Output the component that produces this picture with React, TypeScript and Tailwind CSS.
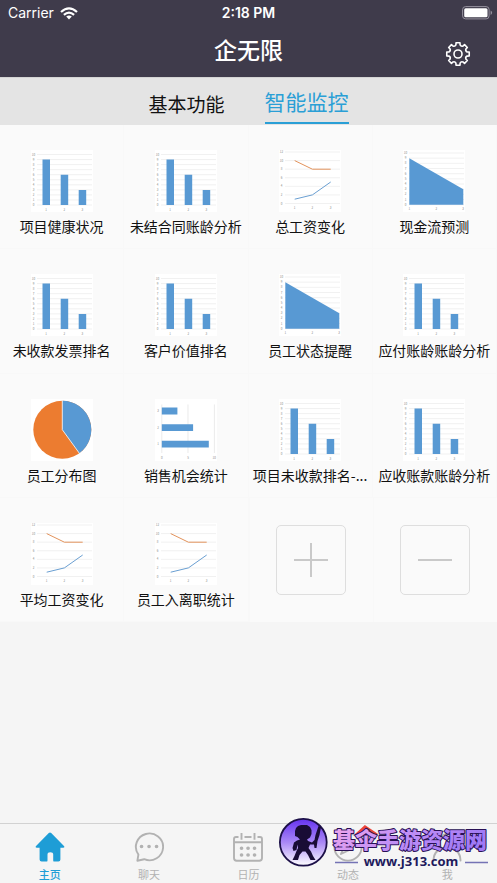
import type { ReactNode } from 'react'
import clsx from 'clsx'

type ChartKind = 'bar' | 'line' | 'area' | 'pie' | 'hbar'

const reports: { label: string; chart: ChartKind }[] = [
  { label: '项目健康状况', chart: 'bar' },
  { label: '未结合同账龄分析', chart: 'bar' },
  { label: '总工资变化', chart: 'line' },
  { label: '现金流预测', chart: 'area' },
  { label: '未收款发票排名', chart: 'bar' },
  { label: '客户价值排名', chart: 'bar' },
  { label: '员工状态提醒', chart: 'area' },
  { label: '应付账龄账龄分析', chart: 'bar' },
  { label: '员工分布图', chart: 'pie' },
  { label: '销售机会统计', chart: 'hbar' },
  { label: '项目未收款排名-...', chart: 'bar' },
  { label: '应收账款账龄分析', chart: 'bar' },
  { label: '平均工资变化', chart: 'line' },
  { label: '员工入离职统计', chart: 'line' },
]

const BLUE = '#5899d3'
const ORANGE = '#ec7c30'

function Chart({ children }: { children: ReactNode }) {
  return (
    <svg width="62" height="62" viewBox="0 0 62 62" fontSize="3" fill="#8a8a8a" textAnchor="middle" aria-hidden="true">
      <rect width="62" height="62" fill="#fff" />
      {children}
    </svg>
  )
}

// Horizontal grid with the value axis on the left
function Grid({ top, bottom, max, step }: { top: number; bottom: number; max: number; step: number }) {
  const count = max / step
  return (
    <>
      {Array.from({ length: count + 1 }, (_, i) => {
        const y = bottom - ((bottom - top) * i) / count
        return (
          <g key={i}>
            <path d={`M6 ${y}H61`} stroke="#e2e2e2" strokeWidth=".5" />
            <text x="2.5" y={y + 1}>{i * step}</text>
          </g>
        )
      })}
    </>
  )
}

function BarChart() {
  return (
    <Chart>
      <Grid top={4.5} bottom={55} max={10} step={1} />
      <path d="M11.5 9.5H19V55H11.5ZM29.7 24.7H37.2V55H29.7ZM47.7 39.9H55.2V55H47.7Z" fill={BLUE} />
      <text x="15.2" y="60.5">1</text>
      <text x="33.4" y="60.5">2</text>
      <text x="51.4" y="60.5">3</text>
    </Chart>
  )
}

function LineChart() {
  return (
    <Chart>
      <Grid top={2} bottom={53.5} max={12} step={2} />
      <path d="M15.7 10.6L33.4 19.2H51.7" fill="none" stroke="#e3935c" />
      <path d="M15.7 49.2L33.4 44.9L51.7 32" fill="none" stroke="#6a9fd2" />
      <text x="15.7" y="59">1</text>
      <text x="33.4" y="59">2</text>
      <text x="51.7" y="59">3</text>
    </Chart>
  )
}

function AreaChart() {
  return (
    <Chart>
      <Grid top={3} bottom={54.7} max={10} step={1} />
      <path d="M6.3 8.2L60.3 39.2V54.7H6.3Z" fill={BLUE} />
      <text x="6.3" y="60">1</text>
      <text x="33.3" y="60">2</text>
      <text x="60" y="60">3</text>
    </Chart>
  )
}

function PieChart() {
  return (
    <Chart>
      <circle cx="31.3" cy="30.7" r="29" fill={ORANGE} />
      <path d="M31.3 30.7V1.7A29 29 0 0 1 48.3 54.2Z" fill={BLUE} />
      <path d="M31.3 1.2V30.7L48.6 54.6" fill="none" stroke="#fff" strokeWidth=".8" />
    </Chart>
  )
}

function HBarChart() {
  return (
    <Chart>
      <path d="M6.8 5.5V54M33 5.5V54M59.4 5.5V54" stroke="#dcdcdc" strokeWidth=".6" />
      <path d="M6.8 8.5H22.4V15.5H6.8ZM6.8 25.2H38.1V32H6.8ZM6.8 41.8H53.8V48.6H6.8Z" fill={BLUE} />
      <text x="3" y="13">3</text>
      <text x="3" y="29.7">2</text>
      <text x="3" y="46.3">1</text>
      <text x="6.8" y="59.5">0</text>
      <text x="33" y="59.5">5</text>
      <text x="59.2" y="59.5">10</text>
    </Chart>
  )
}

const charts = { bar: BarChart, line: LineChart, area: AreaChart, pie: PieChart, hbar: HBarChart }

function WifiIcon() {
  return (
    <svg width="18" height="13" viewBox="0 0 18 13" fill="none" stroke="#fff" strokeWidth="2.2" aria-hidden="true">
      <path d="M1 5Q9-2.2 17 5" />
      <path d="M3.9 7.9Q9 3.4 14.1 7.9" />
      <path d="M9 12.4L6.2 9.6Q9 7.4 11.8 9.6Z" fill="#fff" stroke="none" />
    </svg>
  )
}

function BatteryIcon() {
  return (
    <svg width="31" height="14" viewBox="0 0 31 14" fill="none" aria-hidden="true">
      <rect x=".6" y=".6" width="26.5" height="12.3" rx="3" stroke="#97939f" />
      <rect x="2.2" y="2.2" width="23.3" height="9.1" rx="1.5" fill="#fff" />
      <path d="M28.6 4.5Q31.6 6.7 28.6 9Z" fill="#97939f" />
    </svg>
  )
}

function GearIcon() {
  const teeth = Array.from({ length: 8 }, (_, i) => {
    const at = (deg: number, r: number) => {
      const a = ((i * 45 + deg - 90) * Math.PI) / 180
      return `${(13 + r * Math.cos(a)).toFixed(2)} ${(13 + r * Math.sin(a)).toFixed(2)}`
    }
    return `${i ? 'L' : 'M'}${at(-10, 11.4)}L${at(10, 11.4)}L${at(13, 9.3)}Q${at(22.5, 7.8)} ${at(32, 9.3)}`
  }).join('')
  return (
    <svg width="26" height="26" viewBox="0 0 26 26" fill="none" stroke="#fff" strokeWidth="1.6" strokeLinejoin="round" aria-hidden="true">
      <path d={teeth + 'Z'} />
      <circle cx="13" cy="13" r="4" />
    </svg>
  )
}

function HomeIcon() {
  return (
    <svg width="30" height="30" viewBox="0 0 30 30" fill="currentColor" aria-hidden="true">
      <path d="M13.8.9Q15 0 16.2.9L29.2 14.2Q30 15.6 28.3 15.7H25.4V27.6Q25.4 29.6 23.4 29.6H19.4Q18.2 29.6 18.2 28.4V22.4Q18.2 20.3 15.3 20.3Q12.5 20.3 12.5 22.4V28.4Q12.5 29.6 11.3 29.6H6.6Q4.6 29.6 4.6 27.6V15.7H1.7Q0 15.6.8 14.2Z" />
    </svg>
  )
}

function ChatIcon() {
  return (
    <svg width="30" height="30" viewBox="0 0 30 30" fill="none" stroke="currentColor" strokeWidth="1.9" strokeLinejoin="round" aria-hidden="true">
      <path d="M4.4 22.6A13.6 13.4 0 1 1 10.2 27.2L3.4 28.7Z" />
      <path d="M7.5 14.5h.1M15 14.5h.1M22.5 14.5h.1" strokeWidth="3.6" strokeLinecap="round" />
    </svg>
  )
}

function CalendarIcon() {
  return (
    <svg width="30" height="30" viewBox="0 0 30 30" fill="none" stroke="currentColor" strokeWidth="1.9" aria-hidden="true">
      <path d="M5.5 5H3Q1 5 1 7V26Q1 28.7 3.7 28.7H26.3Q29 28.7 29 26V7Q29 5 27 5H24.5M11.5 5H18.5M1 10.2H29M8.5 1V7.8M21.5 1V7.8" />
      <path d="M8.5 16.3h.1M15 16.3h.1M21.5 16.3h.1M8.5 23h.1M15 23h.1M21.5 23h.1" strokeWidth="3.6" strokeLinecap="round" />
    </svg>
  )
}

function MomentsIcon() {
  return (
    <svg width="30" height="30" viewBox="0 0 30 30" fill="none" stroke="currentColor" strokeWidth="1.9" strokeLinejoin="round" aria-hidden="true">
      <circle cx="15" cy="15" r="13.6" />
      <path d="M22 8L17.5 17.5L8 22L12.5 12.5Z" />
    </svg>
  )
}

function MeIcon() {
  return (
    <svg width="30" height="30" viewBox="0 0 30 30" fill="none" stroke="currentColor" strokeWidth="1.9" strokeLinecap="round" aria-hidden="true">
      <circle cx="15" cy="10" r="8" />
      <path d="M1.5 28.5Q2 16 15 16Q28 16 28.5 28.5" />
    </svg>
  )
}

const navItems = [
  { label: '主页', icon: HomeIcon },
  { label: '聊天', icon: ChatIcon },
  { label: '日历', icon: CalendarIcon },
  { label: '动态', icon: MomentsIcon },
  { label: '我', icon: MeIcon },
]

function SiteBadge() {
  return (
    <svg className="pointer-events-none absolute right-1 bottom-3 w-[216px]" viewBox="0 0 216 56" role="img" aria-label="基伞手游资源网 www.j313.com">
      <defs>
        <linearGradient id="sky" x1="0" y1="0" x2="0" y2="1">
          <stop offset="0" stopColor="#6532f0" />
          <stop offset=".5" stopColor="#a988f5" />
          <stop offset="1" stopColor="#fff" />
        </linearGradient>
        <linearGradient id="letters" x1="0" y1="0" x2="1" y2=".3">
          <stop offset="0" stopColor="#f3a8ea" />
          <stop offset=".5" stopColor="#c391f5" />
          <stop offset="1" stopColor="#a07af5" />
        </linearGradient>
      </defs>
      <circle cx="26.3" cy="27.3" r="23.4" fill="url(#sky)" stroke="#1c1048" strokeWidth="1.8" />
      <g fill="#190c35">
        <path d="M19 13L21 11L24 10H30L33 12L34.5 15V19L33 22.5L30 24.5L31 26L35 27.5L37.5 25L38.5 20L41.5 11L44 12L42.5 20L40.5 26L39.5 33H37.5L37 29.5H33L31.5 33L34 36.5L36 41L38.5 45H33.5L31 40L28.5 36.5H25.5L22.5 40L21 45H15.5L17.5 41L19.5 36L21 33L20.5 29.5L19.5 35L16.5 36L15.5 33L17 27.5L20 25.5L23 24.5L20.5 22L18 21V16Z" />
      </g>
      <path d="M79 20L88 12L100 20" fill="none" stroke="#ec4438" strokeWidth="3" />
      <text x="56" y="33" fontSize="22" fontWeight="900" fontFamily="'Noto Sans CJK SC', sans-serif" fill="url(#letters)" stroke="#281054" strokeWidth="2" strokeLinejoin="round" paintOrder="stroke">
        基伞手游资源网
      </text>
      <path d="M58 47.5H81M188 47.5H211" stroke="#7573b5" strokeWidth="1.3" />
      <text x="134" y="51" fontSize="13" fontWeight="700" fontFamily="'Open Sans', sans-serif" textAnchor="middle" fill="#211a5c">
        www.j313.com
      </text>
    </svg>
  )
}

export default function App() {
  return (
    <div className="flex min-h-screen flex-col bg-[#f5f5f5] font-['Noto_Sans_CJK_SC',sans-serif] text-[#111]">
      <header className="bg-[#3f3b4b] text-white">
        <div className="grid h-[26px] grid-cols-3 items-center px-2 font-['Inter',sans-serif] text-sm">
          <div className="flex items-center gap-1.5">
            <span>Carrier</span>
            <WifiIcon />
          </div>
          <span className="text-center font-semibold">2:18 PM</span>
          <div className="-mr-1 flex justify-end">
            <BatteryIcon />
          </div>
        </div>
        <div className="grid h-[51px] grid-cols-[1fr_auto_1fr] items-center px-[26px]">
          <h1 className="col-start-2 pb-1.5 text-[23px] leading-8 font-medium">企无限</h1>
          <button type="button" aria-label="设置" className="justify-self-end pt-1">
            <GearIcon />
          </button>
        </div>
      </header>

      <div className="flex h-12 items-stretch justify-center gap-10 border-t border-[#d4d4d4] bg-[#e4e4e4]">
        <button type="button" className="pt-1 text-[19px] leading-7">基本功能</button>
        <button type="button" className="mb-px border-b-2 border-[#2a9fd6] pt-0.5 text-[21px] leading-7 text-[#2a9fd6]">智能监控</button>
      </div>

      <main className="flex-1">
        <div className="grid grid-cols-4 bg-[#fafafa]">
          {reports.map(({ label, chart }) => {
            const Icon = charts[chart]
            return (
              <button key={label} type="button" className="flex aspect-square min-w-0 flex-col items-center justify-start gap-1 border-r border-b border-[#f8f8f8] pt-[25px]">
                <Icon />
                <span className="text-sm leading-5 whitespace-nowrap">{label}</span>
              </button>
            )
          })}
          {['添加', '删除'].map((name, i) => (
            <div key={name} className="flex aspect-square items-center justify-center border-l border-[#f8f8f8]">
              <button type="button" aria-label={name} className="flex size-[70px] items-center justify-center rounded-[5px] border border-[#dedede]">
                <svg width="34" height="34" viewBox="0 0 34 34" stroke="#c9c9c9" strokeWidth="2" aria-hidden="true">
                  <path d={i === 0 ? 'M0 17H34M17 0V34' : 'M0 17H34'} />
                </svg>
              </button>
            </div>
          ))}
        </div>
      </main>

      <footer className="relative border-t border-[#d2d2d2]">
        <nav className="grid h-[59px] grid-cols-5">
          {navItems.map(({ label, icon: Icon }, i) => (
            <a
              key={label}
              href="#"
              className={clsx(
                'flex flex-col items-center gap-1 pt-2 text-[11px] leading-4',
                i === 0 ? 'font-medium text-[#1e9dd6]' : 'text-[#b2b2b2]',
              )}
            >
              <Icon />
              {label}
            </a>
          ))}
        </nav>
        <SiteBadge />
      </footer>
    </div>
  )
}
